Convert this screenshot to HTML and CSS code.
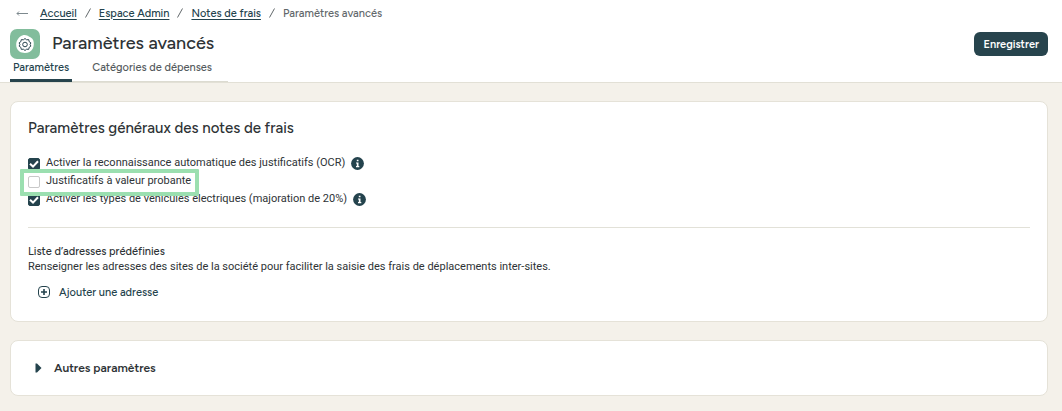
FILE: index.html
```html
<!DOCTYPE html>
<html lang="fr">
<head>
<meta charset="utf-8">
<meta name="viewport" content="width=device-width, initial-scale=1">
<title>Paramètres avancés</title>
<link rel="stylesheet" href="styles.css">
</head>
<body>
<header class="header">
  <nav class="breadcrumb" aria-label="Fil d'Ariane">
    <a class="back" href="#" aria-label="Retour">
      <svg width="12" height="7" viewBox="0 0 12 7"><path d="M12 3.500H1M3 1.500L1 3.500l2 2" fill="none" stroke="currentColor"/></svg>
    </a>
    <a class="crumb" href="#">Accueil</a>
    <svg class="slash" width="6" height="10" viewBox="0 0 6 10"><path d="M5.500 0.500L0.500 9.500" stroke="currentColor"/></svg>
    <a class="crumb" href="#">Espace Admin</a>
    <svg class="slash" width="6" height="10" viewBox="0 0 6 10"><path d="M5.500 0.500L0.500 9.500" stroke="currentColor"/></svg>
    <a class="crumb" href="#">Notes de frais</a>
    <svg class="slash" width="6" height="10" viewBox="0 0 6 10"><path d="M5.500 0.500L0.500 9.500" stroke="currentColor"/></svg>
    <span class="current">Paramètres avancés</span>
  </nav>
  <div class="title-bar">
    <svg class="app-icon" width="30" height="30" viewBox="0 0 30 30">
      <rect width="30" height="30" rx="7" fill="#82bd9c"/>
      <path d="M13 6.200C16 5.600 18.500 7.200 20.800 8.600C23.200 10 24 12.500 23.800 15.500C23.600 18.500 22.500 21.500 19.500 23C16.500 24.400 12 24.300 9.500 22.500C7 20.700 6 18 6.200 15C6.400 11.500 9 7 13 6.200Z" fill="#fff"/>
      <g fill="none" stroke="#2b4650">
        <path d="M15 9.500l1.600 1.300 2.100-.2.500 2.100 1.700 1.200-.8 1.600.8 1.600-1.700 1.200-.5 2.100-2.100-.2L15 21.500l-1.600-1.300-2.100.2-.5-2.100-1.700-1.200.8-1.600-.8-1.600 1.700-1.200.5-2.100 2.100.2z" stroke-linejoin="round"/>
        <circle cx="15" cy="15.500" r="2.300"/>
      </g>
    </svg>
    <h1 class="title">Paramètres avancés</h1>
    <button class="save" type="button">Enregistrer</button>
  </div>
  <nav class="tabs">
    <a class="tab tab-active" href="#" aria-current="page">Paramètres</a>
    <a class="tab" href="#">Catégories de dépenses</a>
  </nav>
</header>
<main class="content">
  <section class="card general">
    <h2 class="card-title">Paramètres généraux des notes de frais</h2>
    <div class="options">
      <div class="option">
        <input class="check" type="checkbox" id="ocr" checked>
        <label for="ocr">Activer la reconnaissance automatique des justificatifs (OCR)</label>
        <svg class="info" width="13" height="13" viewBox="0 0 13 13"><circle cx="6.500" cy="6.500" r="6.400" fill="#24434d"/><path d="M5.800 2.700h1.700v1.600H5.800zM5 5.500h2.500V9h.8v1.200H5V9h.8V6.600H5z" fill="#fff"/></svg>
      </div>
      <div class="option highlighted">
        <input class="check" type="checkbox" id="probante">
        <label for="probante">Justificatifs à valeur probante</label>
      </div>
      <div class="option">
        <input class="check" type="checkbox" id="electrique" checked>
        <label for="electrique">Activer les types de véhicules électriques (majoration de 20%)</label>
        <svg class="info" width="13" height="13" viewBox="0 0 13 13"><circle cx="6.500" cy="6.500" r="6.400" fill="#24434d"/><path d="M5.800 2.700h1.700v1.600H5.800zM5 5.500h2.500V9h.8v1.200H5V9h.8V6.600H5z" fill="#fff"/></svg>
      </div>
    </div>
    <hr class="divider">
    <h3 class="list-title">Liste d’adresses prédéfinies</h3>
    <p class="list-text">Renseigner les adresses des sites de la société pour faciliter la saisie des frais de déplacements inter-sites.</p>
    <button class="add" type="button">
      <svg width="12" height="12" viewBox="0 0 12 12"><rect x=".5" y=".5" width="11" height="11" rx="3.500" fill="none" stroke="currentColor"/><path d="M6 3v6M3 6h6" stroke="currentColor" stroke-width="1.600"/></svg>
      Ajouter une adresse
    </button>
  </section>
  <details class="card other">
    <summary class="summary">
      <svg width="7" height="10" viewBox="0 0 7 10"><path d="M.5.500h1.500L6.500 5 2 9.500H.5z" fill="#24434d"/></svg>
      Autres paramètres
    </summary>
  </details>
</main>
</body>
</html>
```
FILE: styles.css
```css
* { box-sizing: border-box; }

body {
  margin: 0;
  min-height: 100vh;
  background: #f4f1ea;
  color: #2e3336;
  font-family: Figtree, Lato, "Liberation Sans", sans-serif;
  font-size: 11px;
  font-weight: 500;
}

h1, h2, h3, p { margin: 0; font-weight: 500; }
a { color: inherit; text-decoration: none; }
button { font: inherit; border: 0; cursor: pointer; }

.header {
  padding: 5px 14px 0 10px;
  background: #fff;
  border-bottom: 1px solid #e2e0d6;
}

.breadcrumb {
  display: flex;
  align-items: center;
  gap: 8px;
  height: 16px;
  margin-bottom: 1px;
  padding-left: 6px;
}
.back { display: flex; margin-right: 4px; color: #7d898e; }
.crumb {
  color: #24434d;
  text-decoration: underline;
  text-underline-offset: 2px;
}
.slash, .current { color: #62686b; }

.title-bar { display: flex; align-items: center; height: 44px; }
.title {
  flex: 1;
  padding: 0 0 2px 12px;
  font-size: 18px;
  line-height: 22px;
}
.save {
  height: 24px;
  padding: 0 9px;
  border-radius: 6px;
  background: #27444d;
  color: #fff;
  font-weight: 600;
}

.tabs { display: flex; height: 16px; }
.tab {
  padding: 0 16px 0 20px;
  border-bottom: 1px solid #dcdbd1;
  line-height: 4px;
  color: #555b5e;
}
.tab-active {
  padding: 0 3px;
  border-bottom: 3px solid #27444d;
  border-radius: 2px 2px 0 0;
  color: #24434d;
}

.content {
  display: flex;
  flex-direction: column;
  gap: 18px;
  padding: 18px 14px 15px 10px;
}
.card {
  background: #fff;
  border: 1px solid #e5e2d8;
  border-radius: 8px;
}
.general { padding: 16px 17px 21px; }
.card-title { font-size: 15px; line-height: 20px; }

.options {
  display: flex;
  flex-direction: column;
  gap: 5px;
  margin-top: 19px;
  font-family: Roboto, sans-serif;
  font-weight: 400;
}
.option { display: flex; align-items: flex-end; height: 13px; }
.option label { padding: 0 0 1px 6px; line-height: 12px; }
.info { margin-left: 6px; }

.check {
  appearance: none;
  width: 12px;
  height: 12px;
  margin: 0;
  border: 1px solid #c8c8c8;
  border-radius: 2px;
  background: #fff;
}
.check:checked {
  border-color: #24434d;
  background: #24434d url("data:image/svg+xml,%3Csvg xmlns='http://www.w3.org/2000/svg' viewBox='0 0 10 10'%3E%3Cpath d='M1 4.800L4 7.600L9 2.200' fill='none' stroke='white' stroke-width='2'/%3E%3C/svg%3E") center / 10px 10px no-repeat;
}

.highlighted { position: relative; align-self: flex-start; z-index: 1; }
.highlighted::after {
  content: "";
  position: absolute;
  inset: -6px -8px -8px;
  border: 4px solid #9bdfb0;
  border-radius: 1px;
  pointer-events: none;
}

.divider {
  margin: 21px 0 17px;
  border: 0;
  border-top: 1px solid #e2e1d8;
}
.list-title { font-size: 11px; line-height: 14px; }
.list-text {
  font-family: Roboto, sans-serif;
  font-weight: 400;
  line-height: 15px;
}
.add {
  display: flex;
  align-items: center;
  gap: 9px;
  margin-top: 10px;
  padding: 0 10px;
  height: 16px;
  background: none;
  color: #24434d;
}

.summary {
  display: flex;
  align-items: center;
  gap: 12px;
  height: 54px;
  padding-left: 24px;
  font-size: 12px;
  font-weight: 600;
  list-style: none;
  cursor: pointer;
}
```
